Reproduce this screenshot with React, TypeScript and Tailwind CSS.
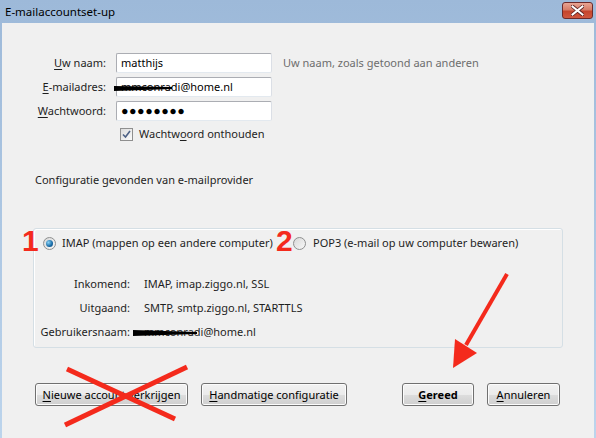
import { FC, ReactNode } from "react"

const font = { fontFamily: '"Noto Sans", "Segoe UI", sans-serif' }
const numFont = { fontFamily: '"Liberation Sans", Arial, sans-serif' }

const U: FC<{ children: ReactNode }> = ({ children }) => (
  <span className="underline underline-offset-2">{children}</span>
)

const Input: FC<{ value: ReactNode; redact?: boolean }> = ({ value, redact }) => (
  <div className="relative flex h-[20px] w-[156px] items-center rounded-[2px] border border-[#abadb3] border-b-[#e3e9ef] border-r-[#dbdfe6] bg-white px-[4px] text-black">
    {value}
    {redact && (
      <svg className="absolute left-[-3px] top-[6px]" width="58" height="8" viewBox="0 0 58 8">
        <path d="M0 2 L58 3 L58 5 L0 7 Z" fill="#000" />
      </svg>
    )}
  </div>
)

const Radio: FC<{ checked?: boolean }> = ({ checked }) => (
  <span className="flex h-[13px] w-[13px] items-center justify-center rounded-full border border-[#8e8f8f] bg-gradient-to-br from-[#d8d8d8] to-[#f8f8f8]">
    {checked && (
      <span className="h-[7px] w-[7px] rounded-full bg-[radial-gradient(circle_at_35%_35%,#8ad2f6,#176aa5_60%,#0b3f70)]" />
    )}
  </span>
)

const Button: FC<{ w: string; children: ReactNode; bold?: boolean }> = ({ w, children, bold }) => (
  <button
    className={`flex h-[23px] ${w} items-center justify-center rounded-[3px] border border-[#707070] bg-[linear-gradient(#f2f2f2_0%,#ebebeb_50%,#dddddd_50%,#cfcfcf_100%)] text-black shadow-[inset_0_0_0_1px_#fcfcfc] ${bold ? "font-bold" : ""}`}
  >
    {children}
  </button>
)

export default function App() {
  return (
    <div
      style={font}
      className="relative flex h-[438px] w-[596px] flex-col overflow-hidden bg-gradient-to-b from-[#9db9d9] to-[#bcd4ec] text-[11px] leading-[16px] text-[#1e1e1e]"
    >
      {/* title bar */}
      <div className="flex h-[23px] items-center justify-between pl-[5px] pr-[3px]">
        <span className="text-[11.5px] text-black">E-mailaccountset-up</span>
        <div className="mb-[2px] flex h-[17px] w-[31px] items-center justify-center rounded-[3px] border border-[#6d2a2a] bg-[linear-gradient(#e8a493_0%,#d77d68_45%,#c5442c_55%,#d0573f_100%)]">
          <svg width="13" height="11" viewBox="0 0 13 11">
            <path d="M1.5 1.5 L11.5 9.5 M11.5 1.5 L1.5 9.5" stroke="#5a2020" strokeWidth="3.6" strokeLinecap="square" />
            <path d="M1.5 1.5 L11.5 9.5 M11.5 1.5 L1.5 9.5" stroke="#fff" strokeWidth="2" strokeLinecap="square" />
          </svg>
        </div>
      </div>

      {/* client area */}
      <div className="mx-[2px] flex flex-1 flex-col bg-[#f0f0f0] pt-[30px]">
        <div className="grid grid-cols-[104px_156px_auto] items-center gap-x-[10px] gap-y-[4px]">
          <span className="text-right">
            <U>U</U>w naam:
          </span>
          <Input value="matthijs" />
          <span className="pl-[1px] text-[#6d6d6d]">Uw naam, zoals getoond aan anderen</span>

          <span className="text-right">
            <U>E</U>-mailadres:
          </span>
          <Input value="mmconradi@home.nl" redact />
          <span />

          <span className="text-right">
            <U>W</U>achtwoord:
          </span>
          <Input value={<span className="text-[12.5px] leading-none tracking-[0.5px]">●●●●●●●●</span>} />
          <span />
        </div>

        <div className="mt-[5px] flex h-[16px] items-center gap-[6px] pl-[118px]">
          <span className="flex h-[13px] w-[13px] items-center justify-center border border-[#8f8f8f] bg-gradient-to-br from-[#dcdcdc] to-[#fbfbfb]">
            <svg width="9" height="9" viewBox="0 0 9 9">
              <path d="M1 4.5 L3.5 7 L8 1" fill="none" stroke="#4d6185" strokeWidth="1.6" />
            </svg>
          </span>
          <span>
            Wachtw<U>o</U>ord onthouden
          </span>
        </div>

        <div className="mt-[30px] h-[16px] pl-[33px]">Configuratie gevonden van e-mailprovider</div>

        {/* group box */}
        <div className="ml-[31px] mt-[40px] flex h-[120px] w-[530px] flex-col rounded-[3px] border border-[#d5dfe5] shadow-[inset_1px_1px_0_#fff]">
          <div className="mt-[6px] flex h-[16px] items-center pl-[9px]">
            <div className="flex w-[250px] items-center gap-[6px]">
              <Radio checked />
              <span>IMAP (mappen op een andere computer)</span>
            </div>
            <div className="flex items-center gap-[7px]">
              <Radio />
              <span>POP3 (e-mail op uw computer bewaren)</span>
            </div>
          </div>

          <div className="mt-[25px] grid grid-cols-[96px_auto] gap-x-[14px] gap-y-[8px]">
            <span className="text-right">Inkomend:</span>
            <span>IMAP, imap.ziggo.nl, SSL</span>
            <span className="text-right">Uitgaand:</span>
            <span>SMTP, smtp.ziggo.nl, STARTTLS</span>
            <span className="text-right">Gebruikersnaam:</span>
            <span className="relative">
              mmconradi@home.nl
              <svg className="absolute left-[-11px] top-[5px]" width="64" height="8" viewBox="0 0 64 8">
                <path d="M0 1 L64 3 L64 5 L0 7 Z" fill="#000" />
              </svg>
            </span>
          </div>
        </div>

        {/* buttons */}
        <div className="mt-[35px] flex items-center pl-[33px] pr-[34px]">
          <Button w="w-[153px]">
            <span>
              <U>N</U>ieuwe account verkrijgen
            </span>
          </Button>
          <div className="ml-[13px]">
            <Button w="w-[146px]">
              <span>
                <U>H</U>andmatige configuratie
              </span>
            </Button>
          </div>
          <div className="ml-auto flex gap-[13px]">
            <Button w="w-[72px]" bold>
              <span>
                <U>G</U>ereed
              </span>
            </Button>
            <Button w="w-[73px]">
              <span>
                <U>A</U>nnuleren
              </span>
            </Button>
          </div>
        </div>
      </div>

      {/* annotations */}
      <span style={numFont} className="absolute left-[22px] top-[224px] text-[30px] font-bold leading-[34px] text-[#f42a1c]">
        1
      </span>
      <span style={numFont} className="absolute left-[276px] top-[224px] text-[30px] font-bold leading-[34px] text-[#f42a1c]">
        2
      </span>
      <svg className="pointer-events-none absolute left-0 top-0" width="596" height="438" viewBox="0 0 596 438">
        <g stroke="#f42a1c" strokeWidth="5">
          <line x1="67" y1="369" x2="175" y2="419" />
          <line x1="65" y1="425" x2="187" y2="367" />
          <line x1="507" y1="274" x2="466" y2="345" strokeWidth="4" />
        </g>
        <polygon points="453,368 455,339 477,353" fill="#f42a1c" />
      </svg>
    </div>
  )
}
